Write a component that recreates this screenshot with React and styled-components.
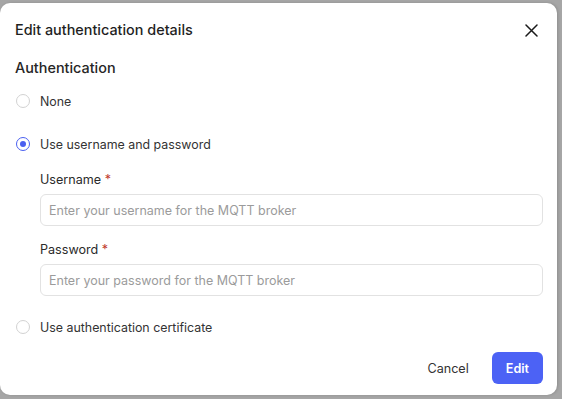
import React, { useState } from 'react';
import styled, { createGlobalStyle } from 'styled-components';

const Global = createGlobalStyle`
  html, body { margin: 0; padding: 0; }
  body {
    font-family: Inter, "Noto Sans", "Liberation Sans", sans-serif;
    background: #a5a5a5;
    overflow: hidden;
  }
`;

const Backdrop = styled.div`
  width: 562px;
  height: 399px;
  display: flex;
  align-items: flex-start;
  padding-top: 3px;
  box-sizing: border-box;
  background: #a6a6a6;
`;

const Modal = styled.div`
  width: 557px;
  height: 392px;
  background: #fff;
  border-radius: 10px;
  box-shadow: 1px 0 3px rgba(0, 0, 0, 0.15);
  padding: 18px 14px 0 15px;
  box-sizing: border-box;
  display: flex;
  flex-direction: column;
`;

const Header = styled.div`
  display: flex;
  justify-content: space-between;
  align-items: center;
  height: 18px;
`;

const Title = styled.h2`
  margin: 0;
  font-size: 14.4px;
  line-height: 18px;
  font-weight: 500;
  color: #1f1f1f;
`;

const CloseButton = styled.button`
  border: 0;
  background: none;
  padding: 0;
  width: 20px;
  height: 20px;
  margin-right: 2px;
  display: flex;
  align-items: center;
  justify-content: center;
  cursor: pointer;
  color: #1a1a1a;
`;

const Heading = styled.h3`
  margin: 20px 0 0;
  font-size: 14.4px;
  line-height: 18px;
  font-weight: 500;
  color: #262626;
`;

const RadioRow = styled.label`
  display: flex;
  align-items: center;
  gap: 10px;
  height: 20px;
  margin-top: ${(p) => p.$gap}px;
  font-size: 12.4px;
  color: #333;
  cursor: pointer;
`;

const Circle = styled.span`
  width: 14px;
  height: 14px;
  margin-left: 1px;
  border-radius: 50%;
  box-sizing: border-box;
  border: ${(p) => (p.$on ? '1.5px solid #4a5ff0' : '1px solid #d2d2d2')};
  display: flex;
  align-items: center;
  justify-content: center;
  &::after {
    content: '';
    width: 6px;
    height: 6px;
    border-radius: 50%;
    background: ${(p) => (p.$on ? '#4a5ff0' : 'transparent')};
  }
`;

const Fields = styled.div`
  margin-left: 25px;
  display: flex;
  flex-direction: column;
`;

const Label = styled.div`
  font-size: 12.6px;
  line-height: 18px;
  font-weight: 400;
  color: #2b2b2b;
  margin-top: ${(p) => p.$gap}px;
  span {
    color: #c0392b;
  }
`;

const Input = styled.input`
  margin-top: 5px;
  height: 32px;
  box-sizing: border-box;
  border: 1px solid #e2e2e2;
  border-radius: 6px;
  padding: 0 8px;
  font-family: inherit;
  font-size: 12.5px;
  color: #333;
  outline: none;
  &::placeholder {
    color: #9b9b9b;
  }
`;

const Footer = styled.div`
  margin-top: 15px;
  display: flex;
  justify-content: flex-end;
  gap: 11px;
`;

const Button = styled.button`
  height: 32px;
  padding: 0 ${(p) => (p.$primary ? 14 : 12)}px;
  border: 0;
  border-radius: 6px;
  font-family: inherit;
  font-size: 12.6px;
  font-weight: ${(p) => (p.$primary ? 600 : 400)};
  background: ${(p) => (p.$primary ? '#4c62f5' : 'transparent')};
  color: ${(p) => (p.$primary ? '#fff' : '#333')};
  cursor: pointer;
`;

const options = [
  { id: 'none', label: 'None' },
  { id: 'userpass', label: 'Use username and password' },
  { id: 'cert', label: 'Use authentication certificate' },
];

export default function App() {
  const [mode, setMode] = useState('userpass');

  return (
    <>
      <Global />
      <Backdrop>
        <Modal>
          <Header>
            <Title>Edit authentication details</Title>
            <CloseButton aria-label="Close">
              <svg width="13" height="13" viewBox="0 0 13 13" fill="none" stroke="currentColor" strokeWidth="1.5" strokeLinecap="round">
                <path d="M1 1L12 12M12 1L1 12" />
              </svg>
            </CloseButton>
          </Header>
          <Heading>Authentication</Heading>

          <RadioRow $gap={14} onClick={() => setMode('none')}>
            <Circle $on={mode === 'none'} />
            {options[0].label}
          </RadioRow>
          <RadioRow $gap={23} onClick={() => setMode('userpass')}>
            <Circle $on={mode === 'userpass'} />
            {options[1].label}
          </RadioRow>

          <Fields>
            <Label $gap={17}>
              Username <span>*</span>
            </Label>
            <Input placeholder="Enter your username for the MQTT broker" />
            <Label $gap={15}>
              Password <span>*</span>
            </Label>
            <Input type="password" placeholder="Enter your password for the MQTT broker" />
          </Fields>

          <RadioRow $gap={21} onClick={() => setMode('cert')}>
            <Circle $on={mode === 'cert'} />
            {options[2].label}
          </RadioRow>

          <Footer>
            <Button>Cancel</Button>
            <Button $primary>Edit</Button>
          </Footer>
        </Modal>
      </Backdrop>
    </>
  );
}
